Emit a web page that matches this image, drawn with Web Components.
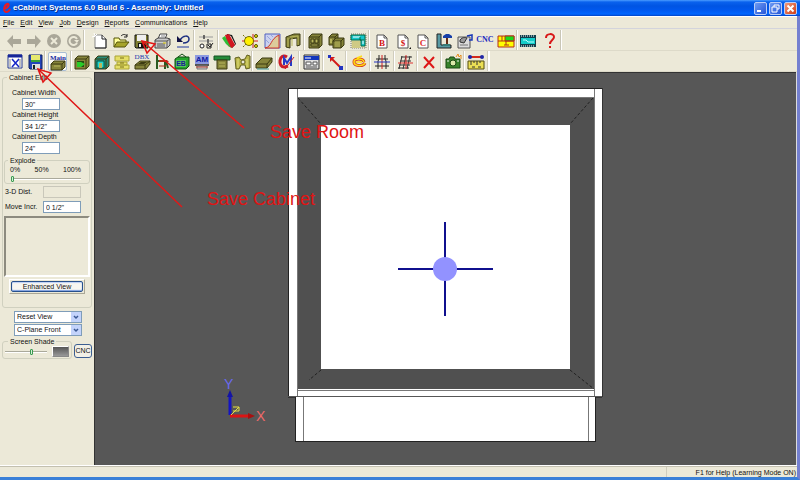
<!DOCTYPE html>
<html lang="en">
<head>
<meta charset="utf-8">
<title>eCabinet Systems 6.0 Build 6 - Assembly: Untitled</title>
<style>
html,body{margin:0;height:100%}
body{font:7px/9px "Liberation Sans",Arial,sans-serif;color:#111;background:#ece9d8;overflow:hidden;
--face:#ece9d8;--line:#d5d2c2;--field:#7f9db9}
</style>
</head>
<body>
<app-window></app-window>
<script>
const define=(name,css,html)=>customElements.define(name,class extends HTMLElement{
  constructor(){super();this.attachShadow({mode:'open'})}
  connectedCallback(){
    const t=document.createElement('template');
    t.innerHTML='<style>*{box-sizing:border-box}button,input,select{font:inherit;color:inherit;margin:0}'+css+'</style>'+(typeof html==='function'?html(this):html);
    this.shadowRoot.replaceChildren(t.content.cloneNode(true));
  }
});

const O='#85843a',D='#3c3b12',L='#b9b75c';
const box=(x,y,w,h,f=O,s=D)=>`<path d="M${x} ${y+3}l3-3h${w-3}v${h-3}l-3 3h${3-w}z" fill="${f}" stroke="${s}"/><path d="M${x} ${y+3}h${w-3}v${h-3}M${x+w-3} ${y+3}l3-3" fill="none" stroke="${s}"/>`;
const page=(c,t)=>`<path d="M4 3h7l3 3v10H4z" fill="#fff" stroke="#555"/><path d="M11 3v3h3" fill="none" stroke="#555"/><text x="9" y="14" text-anchor="middle" font-family="Liberation Serif,serif" font-weight="700" font-size="9" fill="${c}">${t}</text>`;
const icons={
back:`<path d="M2 9l6-6v4h8v5H8v4z" fill="#aaa799"/>`,
forward:`<path d="M16 9l-6-6v4H2v5h8v4z" fill="#aaa799"/>`,
stop:`<circle cx="9" cy="9" r="7" fill="#aaa799"/><path d="M6 6l6 6M12 6l-6 6" stroke="#ece9d8" stroke-width="2"/>`,
refresh:`<circle cx="9" cy="9" r="7" fill="#aaa799"/><path d="M12 11a4 4 0 1 1 0-4" fill="none" stroke="#ece9d8" stroke-width="2"/><path d="M9 8h5l-2 3z" fill="#ece9d8"/>`,
new:`<path d="M4 3h7l4 4v9H4z" fill="#fff" stroke="#888"/><path d="M11 3v4h4M15 7v9H4" fill="none" stroke="#222"/><path d="M3 1l1 3-3 1M3 5l3-3" stroke="#fff" fill="none"/>`,
open:`<path d="M2 15V6h5l1 2h6v2" fill="#ff9" stroke="#55540a"/><path d="M2 15l3-5h12l-4 5z" fill="#a6a42a" stroke="#55540a"/><path d="M9 4c2-2 4-2 6 0m0-2v3h-3" fill="none" stroke="#222"/>`,
save:`<path d="M3 3h13v13H4l-1-1z" fill="#7d7c30" stroke="#111"/><path d="M5 3h9v6H5z" fill="#eee"/><path d="M6 11h8v5H6z" fill="#111"/><path d="M7 12h2v3H7z" fill="#eee"/>`,
print:`<path d="M5 7l2-5h7l-2 5" fill="#fff" stroke="#444"/><path d="M2 8l3-2h9l3 1v6l-3 3H2z" fill="#ccc" stroke="#444"/><path d="M2 9h12v7M14 9l3-2M4 12h8M4 14h8" fill="none" stroke="#555"/><path d="M8 4h4" stroke="#888"/><path d="M10 11h3" stroke="#dc0"/>`,
undo:`<path d="M6 8c3-5 9-5 9-1 0 3-3 4-6 4" fill="none" stroke="#1c2f80" stroke-width="1.500"/><path d="M3 4v6h6z" fill="#114"/><path d="M3 15h12" stroke="#2038a0" stroke-width="1"/>`,
options:`<path d="M2 5h14M2 9h14" stroke="#999"/><path d="M7 3v4M11 7v4" stroke="#444" stroke-width="1.500"/><circle cx="5" cy="14" r="2" fill="#fff" stroke="#222"/><path d="M10 12h4v4h-4zM11 13l2 2 3-4" fill="none" stroke="#222"/>`,
swatches:`<path d="M7 2l5 1 4 9-4 4-6-9z" fill="#111"/><path d="M8 3l3 1 4 8-3 3z" fill="#e8e8d8"/><path d="M5 3l4-1 6 11-3 3-4-2z" fill="#d21820"/><path d="M2 6l3-2 6 12-5-4z" fill="#2fbe35"/>`,
move3d:`<path d="M1 9h16M12 2v14" stroke="#d02020"/><circle cx="8" cy="9" r="4.500" fill="#fff000" stroke="#756e00"/><path d="M2 3l3 3M2 15l3-3" stroke="#756e00" stroke-dasharray="2 1"/><g fill="#ee0" stroke="#554f00"><circle cx="15" cy="4" r="1.500"/><circle cx="15" cy="14" r="1.500"/></g>`,
curve:`<path d="M2 2h15v14H2z" fill="#ccd2ee" stroke="#5060c0"/><path d="M2 16c7-1 5-9 14-13v13z" fill="#ddcb9b" stroke="#ce382b"/><path d="M4 4l4 4M3 8l3 3M8 3l2 2" stroke="#98a5dd"/>`,
molding:`<path d="M2 5l8-3h6v11l-3 1V6l-7 1v9l-4-1z" fill="${O}" stroke="${D}"/><path d="M4 6v9M6 5l8-1v9M8 6v8" fill="none" stroke="${L}"/>`,
cabinet:`${box(3,2,13,14)}<path d="M5 7h3v4H5zM9 7h3v4H9zM5 12h7v2H5z" fill="${L}" stroke="${D}"/>`,
cabinets:`${box(2,2,9,11)}${box(6,6,11,10)}<path d="M8 10h5M8 12h5M8 14h5" stroke="${L}"/><path d="M3 7h2v4H3z" fill="${L}"/>`,
room:`<path d="M2 2h15v14H2z" fill="#e5e0bb" stroke="#777" stroke-dasharray="1 1"/><path d="M2 3h14v11h-4V8H2z" fill="#16c6cb" stroke="#064"/><path d="M3 9h8v7H3z" fill="#cfca85"/><path d="M4 5h7M14 8v4" stroke="#fff"/><path d="M11 5v3h4" stroke="#064" fill="none"/>`,
docB:page('#d21414','B'),
docS:page('#d21414','$')+`<path d="M15 17h2v-2z" fill="#111"/>`,
docC:page('#e03030','C'),
build:`<path d="M2 2v14h14v-3H6V2z" fill="#589aa4" stroke="#222"/><path d="M8 4l3-2h3l3 2v2H8z" fill="#163fa8"/><path d="M12 6v7" stroke="#652c15" stroke-width="2"/><path d="M8 13h7" stroke="#397c77" stroke-width="2"/>`,
props:`<path d="M2 5h12v11H2z" fill="#ddd" stroke="#555"/><path d="M4 8c3-4 7-2 7-2l-3 5-4-1z" fill="#999" stroke="#333"/><path d="M4 13h8" stroke="#777"/><path d="M11 4l5-1v5h-3" fill="none" stroke="#1838b8" stroke-width="1.500"/>`,
layout:`<path d="M1 4h16v11H1z" fill="#ff0" stroke="#b33018"/><path d="M8 4h9v5H8z" fill="#1cd81c" stroke="#b33018"/><path d="M1 9h16M5 4v5M9 9v4M7 13h5" stroke="#b33018"/>`,
film:`<path d="M1 3h16v12H1z" fill="#123f4b"/><path d="M2 6h14v6H2z" fill="#14cdc9"/><path d="M2 4h14M2 14h14" stroke="#fff" stroke-width="1" stroke-dasharray="1 1"/><path d="M4 8h3l2 2h6" stroke="#baffff" fill="none"/>`,
help:`<path d="M5 6c0-5 8-5 8-1 0 3-4 3-4 7" fill="none" stroke="#d81717" stroke-width="2"/><path d="M8 14h2v2H8z" fill="#d81717"/>`,
fit:`<path d="M2 2h14v13H2z" fill="#fff" stroke="#24388c"/><path d="M2 3h14" stroke="#16259a" stroke-width="3"/><path d="M6 6l7 8M13 6l-7 8" stroke="#1425c8" stroke-width="1.500"/><path d="M4 6v8M14 6v8" stroke="#888"/>`,
saveBlue:`<path d="M3 2h13v14H4l-1-1z" fill="#2344b9" stroke="#112060"/><path d="M5 2h9v6H5z" fill="#e6e96f"/><path d="M5 7h9v2H5z" fill="#38a03a"/><path d="M6 11h8v5H6z" fill="#ddd"/><path d="M7 12h2v4H7z" fill="#122"/>`,
main:`<text x="9" y="7" text-anchor="middle" font-family="Liberation Serif,serif" font-weight="700" font-size="7" fill="#1828a0">Main</text>${box(2,8,14,9)}<path d="M5 13h6" stroke="${L}"/>`,
cab1:`${box(2,3,14,13)}<path d="M4 8h7v6H4z" fill="#274c12"/><path d="M4 9h4l4 2-4 3H4z" fill="#29cb29"/>`,
cab2:`${box(2,3,14,13,'#298c78')}<path d="M4 8h7v7H4z" fill="#24d6cf" stroke="#054"/><path d="M6 10h3v5H6z" fill="${L}"/>`,
drawers:`<path d="M2 3h14v5H2zM4 9h10v3H4zM2 12h14v4H2z" fill="#e5df67" stroke="#aaa437"/><path d="M7 5h4M7 10h4M7 14h4" stroke="#766f18"/>`,
dbx:`<text x="9" y="6" text-anchor="middle" font-family="Liberation Serif,serif" font-size="7" fill="#2534ac">DBX</text><path d="M2 12l5-4h10v3l-4 5H2z" fill="${O}" stroke="${D}"/><path d="M5 11l3-2h6l-3 2z" fill="${D}"/><path d="M2 12h10l5-4M12 12v4" fill="none" stroke="${D}"/>`,
chair:`<path d="M4 2v14M4 8h9l2 7M12 8v8" fill="none" stroke="#2b5b21" stroke-width="2"/><path d="M6 7h8l2 2H6z" fill="#b33018"/><path d="M6 13h7" stroke="#b33018"/>`,
eb:`<path d="M2 6l3-2h11v9l-3 3H2z" fill="#26a62c" stroke="#124c14"/><path d="M5 4l4-3 4 3" fill="none" stroke="#124c14"/><path d="M3 7h10v7H3z" fill="#58c45c"/><text x="8" y="13" text-anchor="middle" font-size="7" font-weight="700" fill="#172095">EB</text>`,
am:`<path d="M2 2h14v9H2z" fill="#8c9ae0"/><text x="9" y="9" text-anchor="middle" font-size="8" font-weight="700" fill="#131ba0">AM</text><path d="M2 11h14v2H2z" fill="#555"/><path d="M4 13h10v3H4z" fill="#ccc" stroke="#777"/><path d="M3 14h12" stroke="#b64338"/>`,
pedestal:`<path d="M1 3h16v4H1z" fill="#268c3a" stroke="#175322"/><path d="M4 7h10v9H4z" fill="${O}" stroke="${D}"/><path d="M6 10h6M6 13h6" stroke="${L}"/>`,
part:`<path d="M2 5l4-1 2 3 4-1 2-4 3 1v12l-4 1-1-4H8l-2 4H3z" fill="#b9b647" stroke="#626020"/><circle cx="10" cy="9" r="2" fill="#ece9d8" stroke="#626020"/><path d="M5 6v9M14 6v8" stroke="#dfdd80"/>`,
board:`<path d="M1 11l6-6h10v4l-5 6H1z" fill="${O}" stroke="${D}"/><path d="M1 11h11l5-6M12 11v4" fill="none" stroke="${D}"/><path d="M2 16h12" stroke="#3a9797"/>`,
cm:`<path d="M9 4c-8-5-10 11-2 10l3-1" fill="none" stroke="#cc1d28" stroke-width="3"/><path d="M6 12V5l3 5 4-6v9" fill="none" stroke="#263ac5" stroke-width="2"/><path d="M7 16l9-12" stroke="#cc1d28"/>`,
schedule:`<path d="M2 2h15v14H2z" fill="#ddd" stroke="#333"/><path d="M2 3h15v4H2z" fill="#1237bc"/><path d="M3 5h6" stroke="#fff"/><path d="M4 9h5v3H4zM11 9h4v3h-4zM4 14h11" fill="#fff" stroke="#555"/>`,
points:`<path d="M5 5l9 9" fill="none" stroke="#d21a1a" stroke-width="2"/><path d="M4 4h5L4 9z" fill="#d21a1a"/><path d="M2 2h3v3H2zM13 13h4v4h-4z" fill="#2435c0"/>`,
rotate:`<path d="M15 9c-1-4-10-4-10 0s9 5 11 1" fill="none" stroke="#d73c16" stroke-width="3"/><path d="M15 9c-1-4-10-4-10 0s9 5 11 1M8 5l5-2M7 9h6" fill="none" stroke="#fd1" stroke-width="1.500"/>`,
grid:`<path d="M6 2v4l-1 2v8M12 2v4l1 2v8M3 6h12M2 13h14" fill="none" stroke="#222"/><path d="M9 2v14" stroke="#d02020"/><path d="M1 9h16" stroke="#2435c0"/>`,
mesh:`<path d="M5 4h11M4 8h11M3 12h11M2 15h11M6 3L3 16M10 3L7 16M14 3l-3 13" stroke="#333"/><path d="M2 10h15M10 2v14" stroke="#d33"/>`,
cross:`<path d="M4 4l10 11M14 4L4 15" stroke="#dd1717" stroke-width="2"/>`,
camera:`<path d="M2 6h3l1-2h4l1 2h5v9H2z" fill="#38832b" stroke="#194813"/><circle cx="9" cy="10" r="3" fill="#dbe9ab" stroke="#194813"/><path d="M12 4l2-3 1 3 2-2v4" fill="none" stroke="#e58b1c"/><path d="M3 8h2M13 8h2" stroke="#eee"/>`,
measure:`<path d="M3 4h12" stroke="#d32a1c" stroke-width="2"/><circle cx="3" cy="4" r="2" fill="#1f27a8"/><circle cx="15" cy="4" r="2" fill="#1f27a8"/><path d="M1 8h16v8H1z" fill="#ebdf55" stroke="#554f10"/><path d="M4 8v4M7 8v2M10 8v4M13 8v2M5 14h3M11 14h3" stroke="#333"/>`
};

define('title-bar',`:host{display:flex;align-items:center;height:16px;padding:0 3px 0 2px;gap:2px;color:#fff;font:bold 8px/12px "Liberation Sans",sans-serif;background:linear-gradient(#4b9cff 0,#0a62ee 2px,#0054e3 6px,#0058ee 10px,#0066ff 14px,#0243c4 16px)}
h1{flex:1;font:inherit;margin:0;white-space:nowrap;text-shadow:1px 1px #0a2f8c}
.c{display:flex;gap:2px}button{width:13px;height:13px;padding:0;border:1px solid #b8cdf8;border-radius:2px;background:linear-gradient(135deg,#6e9bf3,#2456d8);display:grid;place-items:center}
button:last-child{background:linear-gradient(135deg,#f09a7a,#cf3c16)}button svg{width:11px;height:11px}`,
`<svg width="9" height="12" viewBox="0 0 9 12" aria-hidden="true"><path d="M2 7c5-1 6-6 3-5S1 10 4 10s4-3 4-3" fill="none" stroke="#e81c24" stroke-width="2"/></svg>
<h1>eCabinet Systems 6.0 Build 6 - Assembly: Untitled</h1><div class="c">
<button aria-label="Minimize"><svg viewBox="0 0 11 11"><path d="M2 8h4" stroke="#fff" stroke-width="2"/></svg></button>
<button aria-label="Restore"><svg viewBox="0 0 11 11" fill="none" stroke="#fff"><path d="M4 4V2h5v4H7M2 4h5v5H2z"/></svg></button>
<button aria-label="Close"><svg viewBox="0 0 11 11"><path d="M2.500 2.500l6 6M8.500 2.500l-6 6" stroke="#fff" stroke-width="2"/></svg></button></div>`);

define('menu-bar',`:host{display:block;border-bottom:1px solid #d3d4dc;border-top:1px solid #fff}nav{display:flex;gap:6px;padding:0 3px;height:11px;align-items:center}
button{border:0;padding:0;background:none}u{text-underline-offset:1px}`,
`<nav>${['File','Edit','View','Job','Design','Reports','Communications','Help'].map(m=>`<button><u>${m[0]}</u>${m.slice(1)}</button>`).join('')}</nav>`);

define('tool-button',`:host{display:flex;flex:1 1 0;justify-content:center;align-items:center;min-width:0}
button{width:19px;height:19px;flex:none;border:1px solid transparent;border-radius:2px;padding:0;background:none;display:grid;place-items:center}
svg{width:18px;height:18px;display:block}:host([wide]) button{width:auto;font:bold 8px/10px "Liberation Serif",serif;color:#1b2cc0}:host([on]) button{border-color:#a9bdd4;background:#fbfaf4}
:host([sep]){border-right:1px solid #d0cdbd;box-shadow:1px 0 #fff}`,
e=>{const i=e.getAttribute('icon');return `<button aria-label="${i}">${i==='CNC'?'CNC':`<svg viewBox="0 0 18 18" aria-hidden="true">${icons[i]}</svg>`}</button>`});

define('tool-group',`:host{display:flex;height:100%;flex:none;border-right:1px solid #c9c6b6;box-shadow:1px 0 #fff}`,
e=>{e.style.width=e.getAttribute('span')+'px';return '<slot></slot>'});

const group=(span,names,o={})=>`<tool-group span="${span}">${names.split(' ').map(n=>`<tool-button icon="${n}" ${n==='CNC'?'wide':''} ${n==='main'?'on':''} ${o.sep?'sep':''}></tool-button>`).join('')}</tool-group>`;
define('tool-strip',`:host{display:flex;height:21px;padding-left:4px;border-bottom:1px solid #dddac9}.gap{width:5px}`,
e=>e.getAttribute('row')==='1'
?group(80,'back forward stop refresh')+'<span class="gap"></span>'+group(105,'new open save print undo')+group(24,'options')+group(86,'swatches move3d curve molding')+group(65,'cabinet cabinets room')+'<span style="width:2px"></span>'+group(146,'docB docS docC build props CNC layout')+group(44,'film help')
:group(41,'fit saveBlue')+group(26,'main')+group(181,'cab1 cab2 drawers dbx chair eb am pedestal part')+group(237,'board cm schedule points rotate grid mesh cross camera measure',{sep:1}));

define('group-box',`:host{display:block}fieldset{margin:0;min-width:0;border:1px solid #d0d0bf;border-radius:3px;padding:var(--pad,0)}legend{padding:0 2px;margin-left:3px;line-height:9px}`,
e=>`<fieldset><legend>${e.getAttribute('label')}</legend><slot></slot></fieldset>`);

define('value-field',`:host{display:block}label{display:block;padding-left:8px;line-height:10px}
input{display:block;width:38px;height:12px;margin-left:18px;border:1px solid var(--field);background:#fff;padding:0 2px;line-height:10px}
:host([inline]) div{display:flex;align-items:center;justify-content:space-between}:host([inline]) label{padding:0}:host([inline]) input{margin:0}
input:disabled{background:var(--face);border-color:#c9c7ba}`,
e=>`<div><label for="v">${e.getAttribute('label')}</label><input id="v" value='${e.getAttribute('value')||''}' ${e.hasAttribute('disabled')?'disabled':''}></div>`);

define('range-slider',`:host{display:block}input{appearance:none;display:block;width:100%;height:8px;background:none}
input::-webkit-slider-runnable-track{height:2px;background:#fff;border-top:1px solid #aaa99b}
input::-webkit-slider-thumb{appearance:none;width:3px;height:6px;margin-top:-3px;background:#d8eed6;border:1px solid #3a9c52;border-radius:1px}`,
e=>`<input type="range" aria-label="${e.getAttribute('label')}" value="${e.getAttribute('value')}">`);

define('combo-box',`:host{display:block;position:relative}select{appearance:none;display:block;width:100%;height:12px;border:1px solid var(--field);border-radius:0;background:#fff;padding:0 12px 0 2px;line-height:10px}
svg{position:absolute;right:1px;top:1px;width:10px;height:10px;pointer-events:none}`,
e=>`<select aria-label="${e.getAttribute('value')}"><option>${e.getAttribute('value')}</option></select><svg viewBox="0 0 10 10"><path d="M0 0h10v10H0z" fill="#c3d3fb"/><path d="M3 4l2 2 2-2" fill="none" stroke="#3a5894" stroke-width="1.500"/></svg>`);

define('side-panel',`:host{display:block;width:94px;padding:1px 2px 0 2px;flex:none}
.edit{--pad:6px 1px 13px}
.explode{margin-top:2px;--pad:0}.ticks{display:flex;justify-content:space-between;padding:0 8px 0 5px;line-height:9px}.explode range-slider{padding:1px 8px 0 6px}
.inl{display:grid;gap:3px;padding:2px 9px 3px 1px}
.preview{height:61px;border:2px solid;border-color:#8d8b7f #fff #fff #8d8b7f}
.ev{margin:2px 5px 0 5px;border:1px solid;border-color:#fff #aaa796 #aaa796 #fff;padding:1px}
.ev button{display:block;width:100%;height:11px;padding:0;line-height:8px;border:1px solid #27508c;border-radius:2px;box-shadow:inset 0 -1px 1px #7c9ede,inset 0 1px 1px #bcd0f4;background:#f7f6f0}
.combos{display:grid;gap:1px;margin:3px 10px 0 12px}
.shade{display:flex;justify-content:space-between;align-items:center;margin-top:1px}.shade group-box{width:70px;--pad:0 2px 1px}
.row{display:flex;align-items:center;justify-content:space-between}.row range-slider{width:42px}.sw{width:17px;height:11px;padding:0;border:1px solid;border-color:#fff #888 #888 #fff;background:linear-gradient(#555,#999)}
.cnc{width:18px;height:14px;margin:5px 0 0;padding:0;border:1px solid #3c5e91;border-radius:3px;background:#f2f0e6}`,
`<group-box class="edit" label="Cabinet Edit"><div><value-field label="Cabinet Width" value='30"'></value-field><value-field label="Cabinet Height" value='34 1/2"'></value-field><value-field label="Cabinet Depth" value='24"'></value-field></div>
<group-box class="explode" label="Explode"><div class="ticks"><span>0%</span><span>50%</span><span>100%</span></div><range-slider label="Explode" value="0"></range-slider></group-box>
<div class="inl"><value-field inline disabled label="3-D Dist."></value-field><value-field inline label="Move Incr." value='0 1/2"'></value-field></div>
<div class="preview"></div><div class="ev"><button>Enhanced View</button></div></group-box>
<div class="combos"><combo-box value="Reset View"></combo-box><combo-box value="C-Plane Front"></combo-box></div>
<div class="shade"><group-box label="Screen Shade"><div class="row"><range-slider label="Screen Shade" value="65"></range-slider><button class="sw" aria-label="Shade colour"></button></div></group-box><button class="cnc">CNC</button></div>`);

define('cabinet-view',`:host{display:block;flex:1;min-width:0;background:#575757;border-left:1px solid #333;border-top:1px solid #333;overflow:hidden}svg{display:block}`,
`<svg width="703" height="392" viewBox="95 73 703 392" role="img" aria-label="Cabinet front view">
<g shape-rendering="crispEdges"><path d="M288 88h314v308H288z" fill="#fff"/><path d="M602 88H288v308" fill="none" stroke="#222"/><path d="M602 88v309M288 397h314" stroke="#333"/>
<path d="M297 97h297v292H297z" fill="#505050"/><path d="M297 89v307M594 89v307M297 97h297M297 390h297" stroke="#777" fill="none"/>
<path d="M321 125h249v244H321z" fill="#fff"/><path d="M295 397h300v44H295z" fill="#fff"/><path d="M295 397v44h300v-44" stroke="#222" fill="none"/><path d="M303 397v44M588 397v44" stroke="#777"/>
<path d="M398 269h95M445 222v94" stroke="#10108e" stroke-width="2"/></g>
<path d="M298 98l23 26M593 98l-23 26M570 370l24 19M321 370l-12 10" stroke="#222" stroke-dasharray="3 2"/>
<circle cx="445" cy="269" r="12" fill="#9292ff"/>
<path d="M230 415v-20" stroke="#1414c4" stroke-width="3"/><path d="M227 397l3-7 3 7z" fill="#1414a4"/><path d="M230 416h20" stroke="#dc1414" stroke-width="3"/><path d="M248 413l7 3-7 3z" fill="#a81010"/>
<path d="M231 415l8-8h-6M233 411h6v-4" fill="none" stroke="#e6df45"/>
<text x="224" y="389" font-size="14" fill="#6a6af0">Y</text><text x="256" y="421" font-size="14" fill="#f06a6a">X</text></svg>`);

define('status-bar',`:host{display:flex;justify-content:flex-end;height:12px;border-top:1px solid #fff;box-shadow:inset 0 1px #c3c0b0;padding:1px 1px 0;line-height:11px}span{border-left:1px solid #d0cdbd;padding-left:29px}`,`<span>F1 for Help (Learning Mode ON)</span>`);

define('callout-layer',`:host{position:absolute;inset:0;pointer-events:none}svg{display:block}`,
`<svg width="800" height="480" viewBox="0 0 800 480" fill="none" stroke="#e01818" stroke-width="1.500"><path d="M244 128L142 41M142 41l13 3-8 9zM182 207L38 69M38 69l13 4-8 9z"/><g stroke="none" fill="#e01414" font-size="18"><text x="270" y="138">Save Room</text><text x="207" y="205">Save Cabinet</text></g></svg>`);

define('app-window',`:host{display:flex;flex-direction:column;height:100vh;position:relative;background:var(--face);overflow:hidden}
.body{flex:1;display:flex;flex-direction:column;min-height:0;border-right:3px solid #7480d0;border-bottom:3px solid #3a80d8}.work{flex:1;display:flex;min-height:0;border-right:1px solid #ddd}tool-strip[row="1"]{padding-top:1px;height:22px}`,
`<title-bar></title-bar><div class="body"><menu-bar></menu-bar><tool-strip row="1"></tool-strip><tool-strip row="2"></tool-strip><div class="work"><side-panel></side-panel><cabinet-view></cabinet-view></div><status-bar></status-bar></div><callout-layer></callout-layer>`);
</script>
</body>
</html>
